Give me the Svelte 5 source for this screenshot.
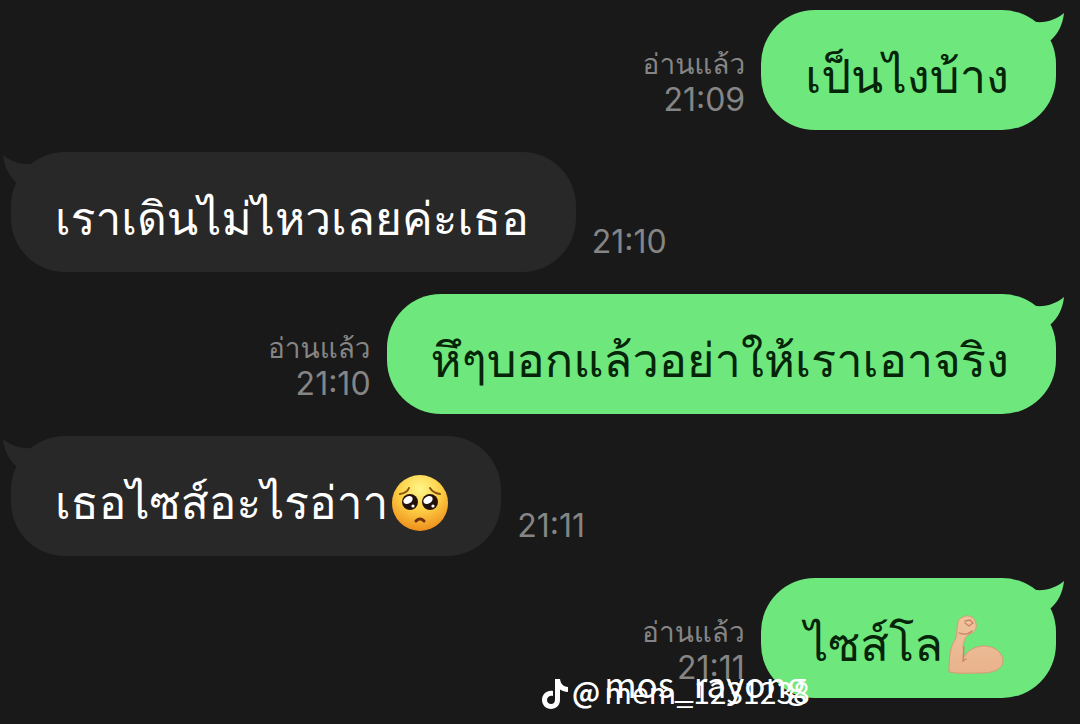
<script>
  const messages = [
    { id: 1, mine: true, text: "เป็นไงบ้าง", time: "21:09" },
    { id: 2, mine: false, text: "เราเดินไม่ไหวเลยค่ะเธอ", time: "21:10" },
    { id: 3, mine: true, text: "หึๆบอกแล้วอย่าให้เราเอาจริง", time: "21:10" },
    { id: 4, mine: false, text: "เธอไซส์อะไรอ่าา", emoji: "pleading", time: "21:11" },
    { id: 5, mine: true, text: "ไซส์โล", emoji: "biceps", time: "21:11" },
  ];
</script>

<main class="chat">
  {#each messages as message (message.id)}
    <div class="row" class:mine={message.mine}>
      <div class="bubble">
        <svg class="tail" viewBox="0 0 40 40" aria-hidden="true">
          <path d="M12 12C23 13 33 9 40 3C39 14 34 24 27 30L18 34L6 16Z" />
        </svg>
        <span>{message.text}</span>
        {#if message.emoji === "pleading"}
          <svg class="emoji" viewBox="0 0 60 60" role="img" aria-label="pleading face">
            <defs>
              <radialGradient id="face" cx="0.5" cy="0.25" r="0.75">
                <stop offset="0" stop-color="#fff68a" />
                <stop offset="0.5" stop-color="#fdcf45" />
                <stop offset="1" stop-color="#ee8f1c" />
              </radialGradient>
            </defs>
            <circle cx="30" cy="30" r="28" fill="url(#face)" />
            <g fill="none" stroke="#87500f" stroke-width="2" stroke-linecap="round">
              <path d="M10 21Q17 20 19 15" />
              <path d="M50 21Q43 20 40 15" />
              <path d="M26 48Q30 44 34 48" stroke="#6b2d0b" stroke-width="3" />
            </g>
            <circle cx="20" cy="29" r="8" fill="#23120b" />
            <circle cx="40" cy="29" r="8" fill="#23120b" />
            <g fill="#fff">
              <ellipse cx="18" cy="27" rx="5" ry="3.500" transform="rotate(-30 18 27)" />
              <ellipse cx="38" cy="27" rx="5" ry="3.500" transform="rotate(-30 38 27)" />
              <circle cx="23" cy="33" r="1.600" />
              <circle cx="43" cy="33" r="1.600" />
            </g>
          </svg>
        {:else if message.emoji === "biceps"}
          <svg class="emoji" viewBox="0 0 60 60" role="img" aria-label="flexed biceps">
            <defs>
              <linearGradient id="skin" x1="0" y1="0" x2="0" y2="1">
                <stop offset="0" stop-color="#f0c49e" />
                <stop offset="1" stop-color="#e8b28c" />
              </linearGradient>
            </defs>
            <path
              d="M13 8C13 4 17 2 21 1C25 0 31 4 31 9C32 13 30 17 25 19C20 21 19 25 18 32L19 42C23 35 31 31 39 31C50 31 58 38 58 46C58 54 48 58 37 58C24 58 13 59 4 57C4 44 5 32 10 25C13 20 11 14 13 8Z"
              fill="url(#skin)"
              stroke="#d79b75"
            />
            <path
              d="M14 18Q22 21 27 16M20 6L25 5L28 8L24 11L20 8M19 32L18 46L21 44"
              fill="none"
              stroke="#c68560"
              stroke-width="1.300"
              stroke-linecap="round"
            />
          </svg>
        {/if}
      </div>
      <div class="meta">
        {#if message.mine}<span class="read">อ่านแล้ว</span>{/if}
        <time>{message.time}</time>
      </div>
    </div>
  {/each}

  <div class="watermark">
    <svg class="note" viewBox="0 0 26 30" aria-hidden="true">
      <path
        d="M13 0H18C18.500 4.500 21 7.500 26 8V13C23 13 20.500 12 18 10.500V20.500C18 26.500 14 30 9 30C4 30 0 26 0 21C0 15 5 11 11 12V17C8 16 5 18 5 21C5 23.500 7 25 9 25C11.500 25 13 23.500 13 20.500Z"
        fill="#fff"
      />
    </svg>
    <span class="at">@</span>
    <span class="names">
      <span>mem_1231238</span>
      <span class="over">mos_rayong</span>
    </span>
  </div>
</main>

<style>
  :global(body) {
    margin: 0;
    background: #191919;
  }

  .chat {
    position: relative;
    display: flex;
    flex-direction: column;
    gap: 22px;
    padding: 10px 24px 26px 11px;
    overflow: hidden;
    font-family: Loma, "Liberation Sans", sans-serif;
  }

  .row {
    display: flex;
    align-items: flex-end;
    gap: 16px;
  }

  .mine {
    flex-direction: row-reverse;
  }

  .bubble {
    position: relative;
    display: flex;
    align-items: center;
    gap: 2px;
    box-sizing: border-box;
    height: 120px;
    padding: 14px 47px 0 44px;
    border-radius: 54px;
    background: #282828;
    color: #fff;
    font-size: 46px;
    line-height: 60px;
    white-space: nowrap;
  }

  .mine .bubble {
    background: #6ee77d;
    color: #062408;
    font-size: 47px;
  }

  .tail {
    position: absolute;
    top: 0;
    left: -8px;
    width: 40px;
    height: 40px;
    fill: #282828;
    transform: scaleX(-1);
  }

  .mine .tail {
    left: auto;
    right: -8px;
    fill: #6ee77d;
    transform: none;
  }

  .emoji {
    flex: none;
    width: 60px;
    height: 60px;
    margin-right: 4px;
  }

  .meta {
    display: flex;
    flex-direction: column;
    align-items: flex-end;
    padding-bottom: 12px;
    color: #858585;
    font-size: 28px;
    line-height: 36px;
    white-space: nowrap;
  }

  .meta time {
    font-family: Inter, sans-serif;
    font-size: 32px;
  }

  .watermark {
    position: absolute;
    left: 542px;
    bottom: 15px;
    display: flex;
    align-items: flex-end;
    gap: 4px;
    color: #fff;
    font-family: "Noto Sans CJK SC", sans-serif;
    font-size: 30px;
    line-height: 36px;
  }

  .note {
    width: 26px;
    height: 30px;
  }

  .at {
    font-weight: 700;
    font-size: 28px;
  }

  .names {
    position: relative;
  }

  .over {
    position: absolute;
    left: 0;
    bottom: 8px;
    font-size: 35px;
  }
</style>
